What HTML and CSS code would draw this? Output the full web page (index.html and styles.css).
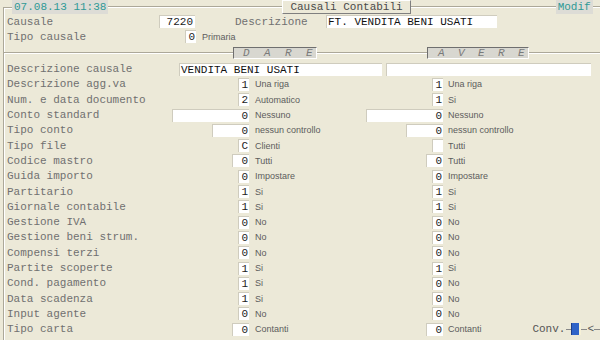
FILE: index.html
```html
<!DOCTYPE html>
<html lang="it">
<head>
    <meta charset="UTF-8">
    <title>Causali Contabili</title>
    <link rel="stylesheet" href="styles.css">
</head>
<body>
    <div class="screen">
        <div class="topbar">
            <span class="corner"></span>
            <span class="tag">07.08.13 11:38</span>
            <span class="rule r1"></span>
            <span class="title">Causali Contabili</span>
            <span class="rule r2"></span>
            <span class="tag">Modif</span>
            <span class="rule grow"></span>
        </div>
        <div class="frame">
            <div class="head">
                <span class="lbl l-causale">Causale</span>
                <span class="box w-cod">7220</span>
                <span class="lbl l-descr">Descrizione</span>
                <span class="box w-descr txt">FT. VENDITA BENI USATI</span>
            </div>
            <div class="head">
                <span class="lbl l-tipo">Tipo causale</span>
                <span class="box w1">0</span>
                <span class="note pad">Primaria</span>
            </div>
            <div class="divider">
                <span class="rule d1"></span>
                <span class="side dare">D A R E</span>
                <span class="rule d2"></span>
                <span class="side avere">A V E R E</span>
                <span class="rule grow"></span>
            </div>

            <div class="row wide">
                <span class="lbl l-wide">Descrizione causale</span>
                <span class="box txt w-dl">VENDITA BENI USATI</span>
                <span class="box txt w-dr"></span>
            </div>
            <div class="row">
                <span class="lbl">Descrizione agg.va</span>
                <span class="box w1">1</span><span class="note">Una riga</span>
                <span class="box w1">1</span><span class="note rn">Una riga</span>
            </div>
            <div class="row">
                <span class="lbl">Num. e data documento</span>
                <span class="box w1">2</span><span class="note">Automatico</span>
                <span class="box w1">1</span><span class="note rn">Si</span>
            </div>
            <div class="row">
                <span class="lbl">Conto standard</span>
                <span class="box w4">0</span><span class="note">Nessuno</span>
                <span class="box w4">0</span><span class="note rn">Nessuno</span>
            </div>
            <div class="row">
                <span class="lbl">Tipo conto</span>
                <span class="box w3">0</span><span class="note">nessun controllo</span>
                <span class="box w3">0</span><span class="note rn">nessun controllo</span>
            </div>
            <div class="row">
                <span class="lbl">Tipo file</span>
                <span class="box w1">C</span><span class="note">Clienti</span>
                <span class="box w1"></span><span class="note rn">Tutti</span>
            </div>
            <div class="row">
                <span class="lbl">Codice mastro</span>
                <span class="box w2">0</span><span class="note">Tutti</span>
                <span class="box w2">0</span><span class="note rn">Tutti</span>
            </div>
            <div class="row">
                <span class="lbl">Guida importo</span>
                <span class="box w1">0</span><span class="note">Impostare</span>
                <span class="box w1">0</span><span class="note rn">Impostare</span>
            </div>
            <div class="row">
                <span class="lbl">Partitario</span>
                <span class="box w1">1</span><span class="note">Si</span>
                <span class="box w1">1</span><span class="note rn">Si</span>
            </div>
            <div class="row">
                <span class="lbl">Giornale contabile</span>
                <span class="box w1">1</span><span class="note">Si</span>
                <span class="box w1">1</span><span class="note rn">Si</span>
            </div>
            <div class="row">
                <span class="lbl">Gestione IVA</span>
                <span class="box w1">0</span><span class="note">No</span>
                <span class="box w1">0</span><span class="note rn">No</span>
            </div>
            <div class="row">
                <span class="lbl">Gestione beni strum.</span>
                <span class="box w1">0</span><span class="note">No</span>
                <span class="box w1">0</span><span class="note rn">No</span>
            </div>
            <div class="row">
                <span class="lbl">Compensi terzi</span>
                <span class="box w1">0</span><span class="note">No</span>
                <span class="box w1">0</span><span class="note rn">No</span>
            </div>
            <div class="row">
                <span class="lbl">Partite scoperte</span>
                <span class="box w1">1</span><span class="note">Si</span>
                <span class="box w1">1</span><span class="note rn">Si</span>
            </div>
            <div class="row">
                <span class="lbl">Cond. pagamento</span>
                <span class="box w1">1</span><span class="note">Si</span>
                <span class="box w1">0</span><span class="note rn">No</span>
            </div>
            <div class="row">
                <span class="lbl">Data scadenza</span>
                <span class="box w1">1</span><span class="note">Si</span>
                <span class="box w1">0</span><span class="note rn">No</span>
            </div>
            <div class="row">
                <span class="lbl">Input agente</span>
                <span class="box w1">0</span><span class="note">No</span>
                <span class="box w1">0</span><span class="note rn">No</span>
            </div>
            <div class="row">
                <span class="lbl">Tipo carta</span>
                <span class="box w2">0</span><span class="note">Contanti</span>
                <span class="box w2">0</span>
                <span class="note rn last">
                    <span>Contanti</span>
                    <span class="conv">
                        <span class="conv-lbl">Conv.</span>
                        <span class="dash c1"></span>
                        <span class="knob"></span>
                        <span class="dash c2"></span>
                        <span class="conv-lbl">&lt;</span>
                        <span class="dash c3"></span>
                    </span>
                </span>
            </div>
        </div>
    </div>
</body>
</html>
```

FILE: styles.css
```css
body {
    margin: 0;
    background-color: #ece9d8;
    font-family: "Liberation Mono", "DejaVu Sans Mono", monospace;
    font-size: 11px;
    color: #707070;
    overflow: hidden;
}
.screen {
    width: 600px;
    height: 340px;
    overflow: hidden;
}
.topbar {
    display: flex;
    align-items: center;
    height: 14px;
    padding-left: 3px;
}
.corner {
    align-self: flex-end;
    width: 8px;
    height: 6px;
    border-top: 1px solid #aca899;
    border-left: 1px solid #aca899;
    box-shadow: inset 1px 1px #fff;
}
.rule {
    height: 0;
    border-top: 1px solid #aca899;
    border-bottom: 1px solid #fff;
}
.r1 { width: 174px; }
.r2 { width: 145px; }
.grow { flex: 1; }
.tag {
    background-color: #dddcd6;
    color: #2f9995;
    padding: 0 2px;
    height: 14px;
    line-height: 14px;
}
.title {
    height: 12px;
    line-height: 12px;
    padding: 0 7px;
    color: #4a4a4a;
    border: 1px solid;
    border-color: #fff #7f7f7f #7f7f7f #fff;
}
.frame {
    margin-left: 3px;
    height: 326px;
    border-left: 1px solid #aca899;
    box-shadow: inset 1px 0 #fff;
}
.head {
    display: flex;
    align-items: center;
    height: 15px;
    padding-left: 3px;
}
.lbl {
    white-space: nowrap;
    color: #707070;
}
.l-causale { width: 152px; }
.l-descr { width: 91px; margin-left: 40px; }
.l-tipo { width: 178px; }
.box {
    box-sizing: border-box;
    height: 13px;
    line-height: 12px;
    background-color: #fff;
    border-top: 1px solid #cfccbe;
    border-left: 1px solid #cfccbe;
    color: #222;
    text-align: right;
    padding-right: 1px;
    white-space: nowrap;
    overflow: hidden;
}
.box.txt {
    text-align: left;
    padding-left: 1px;
    color: #111;
}
.w-cod { width: 36px; padding-right: 2px; }
.w-descr { width: 171px; }
.w1 { width: 11px; }
.w2 { width: 17px; }
.w3 { width: 37px; }
.w4 { width: 77px; }
.w-dl { width: 203px; }
.w-dr { width: 205px; margin-left: 4px; }
.note {
    font-family: "Liberation Sans", Arial, sans-serif;
    font-size: 9px;
    color: #5c5c5c;
    padding-left: 6px;
    white-space: nowrap;
}
.note.rn { padding-left: 5px; }
.divider {
    display: flex;
    align-items: center;
    height: 17.5px;
}
.d1 { width: 229px; }
.d2 { width: 110px; }
.side {
    box-sizing: border-box;
    height: 12px;
    line-height: 11px;
    font-style: italic;
    color: #7a7a7a;
    background-color: #d8d7d0;
    border: 1px solid;
    border-color: #6f6f6f #fff #fff #6f6f6f;
    white-space: pre;
}
.dare { width: 84px; padding-left: 9px; letter-spacing: 3.9px; }
.avere { width: 102px; padding-left: 10px; letter-spacing: 3.4px; }
.row {
    display: grid;
    grid-template-columns: 162px 80px 106px 88px 1fr;
    align-items: center;
    height: 15.3px;
    padding-left: 3px;
}
.row .box { justify-self: end; }
.row.wide {
    display: flex;
}
.l-wide { width: 172px; }
.last {
    display: flex;
    align-items: center;
}
.conv {
    display: flex;
    align-items: center;
    margin-left: auto;
}
.conv-lbl {
    font-family: "Liberation Mono", monospace;
    font-size: 11px;
    color: #555;
}
.dash {
    height: 0;
    border-top: 1px solid #888;
}
.c1 { width: 5px; margin-left: 1px; }
.c2 { width: 6px; }
.c3 { width: 6px; }
.knob {
    width: 7px;
    height: 12px;
    background-color: #2f63c8;
    border-left: 1px solid #1e3f8a;
    border-right: 2px solid #f6f1d6;
}
```
